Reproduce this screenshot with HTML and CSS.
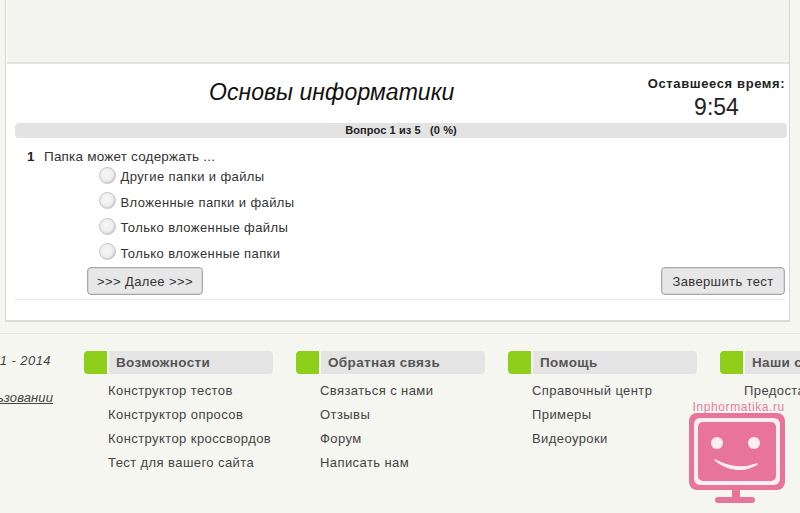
FILE: index.html
```html
<!DOCTYPE html>
<html lang="ru">
<head>
<meta charset="utf-8">
<title>Основы информатики</title>
<link rel="stylesheet" href="styles.css">
</head>
<body>
<div class="page">
  <main class="panel">
    <div class="strip"></div>
    <section class="test">
      <header class="head">
        <h1 class="title">Основы информатики</h1>
        <div class="timer">
          <div class="timer-label">Оставшееся время:</div>
          <div class="timer-value">9:54</div>
        </div>
      </header>
      <div class="progress">Вопрос 1 из 5 &nbsp; (0 %)</div>
      <div class="question"><span class="num">1</span><span>Папка может содержать ...</span></div>
      <div class="answers">
        <label class="answer"><span class="radio"></span><span>Другие папки и файлы</span></label>
        <label class="answer"><span class="radio"></span><span>Вложенные папки и файлы</span></label>
        <label class="answer"><span class="radio"></span><span>Только вложенные файлы</span></label>
        <label class="answer"><span class="radio"></span><span>Только вложенные папки</span></label>
      </div>
      <div class="actions">
        <button class="btn next">&gt;&gt;&gt; Далее &gt;&gt;&gt;</button>
        <button class="btn finish">Завершить тест</button>
      </div>
    </section>
  </main>
  <footer class="footer">
    <div class="legal">
      <div class="copy">© 2011 - 2014</div>
      <a class="terms">Соглашение об использовании</a>
    </div>
    <div class="col">
      <div class="col-head"><span class="mark"></span><span class="col-title">Возможности</span></div>
      <ul class="links"><li>Конструктор тестов</li><li>Конструктор опросов</li><li>Конструктор кроссвордов</li><li>Тест для вашего сайта</li></ul>
    </div>
    <div class="col">
      <div class="col-head"><span class="mark"></span><span class="col-title">Обратная связь</span></div>
      <ul class="links"><li>Связаться с нами</li><li>Отзывы</li><li>Форум</li><li>Написать нам</li></ul>
    </div>
    <div class="col">
      <div class="col-head"><span class="mark"></span><span class="col-title">Помощь</span></div>
      <ul class="links"><li>Справочный центр</li><li>Примеры</li><li>Видеоуроки</li></ul>
    </div>
    <div class="col">
      <div class="col-head"><span class="mark"></span><span class="col-title">Наши сервисы</span></div>
      <ul class="links"><li>Предоставление</li></ul>
    </div>
  </footer>
  <div class="badge">
    <div class="badge-text">Inphormatika.ru</div>
    <svg class="badge-icon" width="96" height="92" viewBox="0 0 96 92">
      <rect x="0" y="0" width="96" height="77" rx="8" fill="#e8739b"/>
      <rect x="5" y="5" width="86" height="67" rx="6" fill="#fbeef2"/>
      <rect x="9" y="9" width="78" height="59" rx="5" fill="#e8739b"/>
      <circle cx="28" cy="30" r="6" fill="#fbeef3"/>
      <circle cx="65" cy="30" r="6" fill="#fbeef3"/>
      <path d="M26 47 C38 57 54 60 68 51 C54 56 40 55 26 47 Z" fill="#fbeef3" stroke="#fbeef3" stroke-width="1.5" stroke-linejoin="round"/>
      <rect x="43" y="77" width="8" height="9" fill="#e8739b"/>
      <rect x="26" y="84" width="40" height="6" rx="3" fill="#e8739b"/>
    </svg>
  </div>
</div>
</body>
</html>
```
FILE: styles.css
```css
* { box-sizing: border-box; }
html, body { margin: 0; height: 100%; }
body {
  background: #f5f6f0;
  font-family: "Liberation Sans", Arial, sans-serif;
  color: #333;
  overflow: hidden;
}
.page { position: relative; width: 800px; height: 513px; overflow: hidden; }

.panel {
  margin-left: 5px;
  width: 785px;
  height: 322px;
  border: 1px solid #d6d8d2;
  border-top: 0;
  border-bottom: 2px solid #d9dbd6;
  background: #fff;
  display: flex;
  flex-direction: column;
}
.strip { height: 64px; background: #f3f4ef; border-bottom: 2px solid #e3e4df; flex: none; margin-left: 1px; }
.test { padding: 0 4px 0 9px; flex: 1; display: flex; flex-direction: column; }

.head { position: relative; height: 59px; flex: none; }
.title {
  margin: 0;
  position: absolute;
  left: 194px;
  top: 14px;
  font-size: 23px;
  line-height: 28px;
  font-weight: 400;
  font-style: italic;
  color: #111;
  letter-spacing: .05px;
  white-space: nowrap;
}
.timer { position: absolute; right: -4px; top: 12px; width: 145px; text-align: center; }
.timer-label { font-size: 13px; line-height: 16px; font-weight: 700; color: #222; letter-spacing: .62px; white-space: nowrap; }
.timer-value { font-size: 23px; line-height: 27px; color: #222; margin-top: 2px; }

.progress {
  height: 15px;
  width: 772px;
  border-radius: 4px;
  background: #e3e3e3;
  font-size: 11px;
  line-height: 15px;
  font-weight: 700;
  color: #222;
  text-align: center;
  letter-spacing: .08px;
}
.question { display: flex; margin-top: 11px; font-size: 13.5px; line-height: 16px; color: #333; height: 16px; flex: none; letter-spacing: .2px; }
.num { width: 29px; padding-left: 12px; font-weight: 700; color: #222; }

.answers { display: flex; flex-direction: column; padding-left: 84px; margin-top: -1px; }
.answer { display: flex; align-items: center; height: 25.5px; font-size: 13px; color: #333; letter-spacing: .4px; }
.radio {
  width: 17px;
  height: 17px;
  margin-right: 4.5px;
  margin-top: -3px;
  border-radius: 50%;
  border: 1px solid #c5c5c5;
  background: radial-gradient(circle at 45% 40%, #f7f7f7 0%, #ececf0 60%, #dcdce0 100%);
  box-shadow: inset -1px -1px 1px #cfcfcf;
  flex: none;
}

.actions {
  display: flex;
  justify-content: space-between;
  margin-top: 1px;
  padding-left: 72px;
  width: 770px;
  height: 33px;
  border-bottom: 1px solid #e8e8e8;
  flex: none;
}
.btn {
  height: 28px;
  border: 1px solid #a9a9a9;
  box-shadow: inset 0 0 0 .5px #c4c4c4;
  border-radius: 4px;
  background: #e7e7e7;
  font-family: inherit;
  font-size: 13px;
  color: #333;
  padding: 0;
  letter-spacing: .38px;
}
.next { width: 116px; }
.finish { width: 124px; }

.footer {
  margin-top: 11px;
  border-top: 1px solid #e2e3dd;
  height: 180px;
  display: flex;
  gap: 23px;
  padding-top: 17px;
}
.legal {
  width: 61px;
  flex: none;
  display: flex;
  flex-direction: column;
  align-items: flex-end;
  font-size: 13px;
  font-style: italic;
  color: #444;
  white-space: nowrap;
  overflow: hidden;
  padding-right: 8px;
}
.copy { line-height: 20px; margin-right: 2px; letter-spacing: .45px; }
.terms { margin-top: 19px; line-height: 16px; text-decoration: underline; letter-spacing: .1px; }
.col { width: 189px; flex: none; }
.col-head { display: flex; height: 23px; }
.mark { width: 23px; height: 23px; background: #8dcf1a; border-radius: 4px 0 0 4px; flex: none; }
.col-title {
  flex: 1;
  margin-left: 2px;
  background: #e4e4e4;
  border-radius: 0 4px 4px 0;
  font-size: 13.5px;
  font-weight: 700;
  line-height: 24px;
  color: #555;
  padding-left: 7px;
  letter-spacing: .36px;
  white-space: nowrap;
}
.links { list-style: none; margin: 5px 0 0; padding: 0 0 0 24px; font-size: 13px; color: #444; letter-spacing: .42px; white-space: nowrap; }
.links li { height: 24px; line-height: 24px; }

.badge {
  position: absolute;
  left: 688.5px;
  top: 401px;
  width: 96px;
}
.badge-text { font-size: 12px; line-height: 13px; color: #e57f9f; text-align: center; letter-spacing: .6px; white-space: nowrap; padding-left: 4px; }
.badge-icon { display: block; margin-top: -1px; }
```
